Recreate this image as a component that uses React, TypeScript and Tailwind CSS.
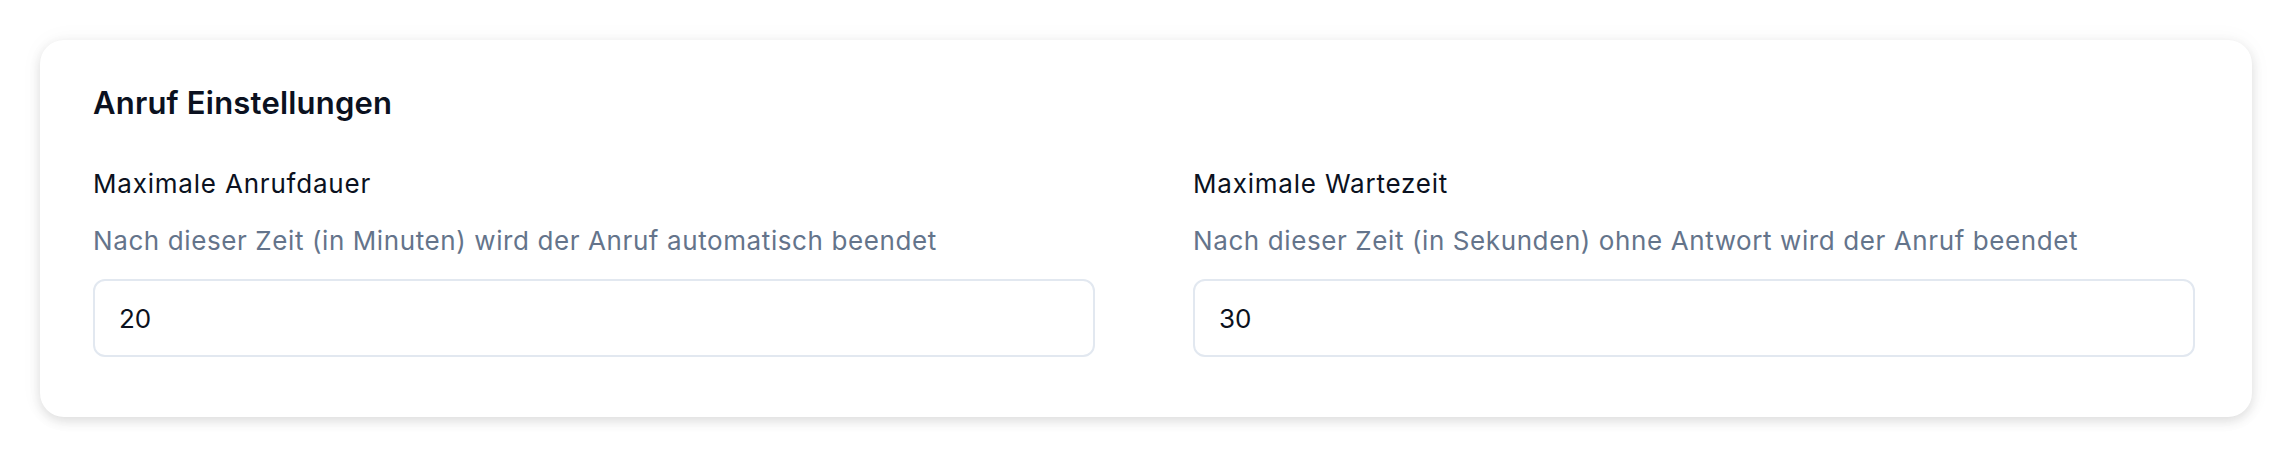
const fields = [
  {
    label: 'Maximale Anrufdauer',
    hint: 'Nach dieser Zeit (in Minuten) wird der Anruf automatisch beendet',
    value: '20',
  },
  {
    label: 'Maximale Wartezeit',
    hint: 'Nach dieser Zeit (in Sekunden) ohne Antwort wird der Anruf beendet',
    value: '30',
  },
];

const App = () => {
  return (
    <div
      className="w-[2292px] h-[458px] bg-white pt-[40px] pl-[40px]"
      style={{ fontFamily: 'Inter, "Noto Sans", sans-serif' }}
    >
      <div className="w-[2212px] h-[377px] bg-white rounded-[24px] shadow-[0_4px_12px_rgba(0,0,0,0.12),0_0_24px_rgba(0,0,0,0.04)] pt-[45px] pl-[53px] pr-[57px]">
        <h2 className="text-[31px] leading-[36px] font-semibold text-[#0b1120] tracking-[0.2px]">
          Anruf Einstellungen
        </h2>
        <div className="grid grid-cols-2 gap-x-[98px] mt-[47px]">
          {fields.map(f => (
            <div key={f.label} className="flex flex-col">
              <label className="text-[26px] leading-[32px] font-normal text-[#0b1120] tracking-[0.8px]">{f.label}</label>
              <p className="mt-[25px] text-[26px] leading-[32px] text-[#64748b] tracking-[0.6px]">{f.hint}</p>
              <input
                defaultValue={f.value}
                className="mt-[22px] h-[78px] w-full rounded-[12px] border-2 border-[#e2e8f0] bg-white px-[24px] text-[26px] text-[#0b1120] outline-none"
              />
            </div>
          ))}
        </div>
      </div>
    </div>
  );
};

export default App;
